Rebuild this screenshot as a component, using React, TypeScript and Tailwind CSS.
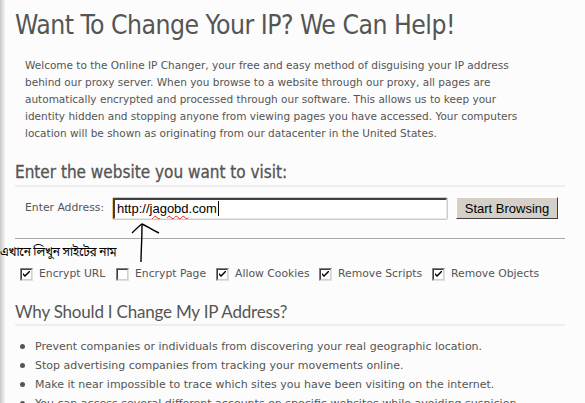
import React from "react";

const body = { fontFamily: '"DejaVu Sans", Verdana, sans-serif' };
const arial = { fontFamily: '"Liberation Sans", Arial, sans-serif' };
const cond = { fontFamily: '"DejaVu Sans Condensed", "DejaVu Sans", Tahoma, sans-serif' };

function Box({ checked }: { checked: boolean }) {
  return (
    <span className="relative inline-block w-[13px] h-[13px] bg-white border border-t-[#808080] border-l-[#808080] border-b-[#e0e0e0] border-r-[#e0e0e0] shrink-0">
      <span className="absolute inset-0 border border-t-[#404040] border-l-[#404040] border-b-[#d4d0c8] border-r-[#d4d0c8]" />
      {checked && (
        <svg className="absolute left-[2px] top-[2px]" width="7" height="7" viewBox="0 0 7 7">
          <path d="M0 2 L0 4 L2 6 L7 1 L7 -1 L2 4 Z" fill="#000" />
        </svg>
      )}
    </span>
  );
}

function Opt({ label, checked, w }: { label: string; checked: boolean; w: string }) {
  return (
    <div className={`flex items-center gap-[6px] ${w}`}>
      <Box checked={checked} />
      <span className="text-[10.8px] text-[#555]">{label}</span>
    </div>
  );
}

export default function App() {
  return (
    <div className="relative w-[585px] h-[403px] overflow-hidden bg-[#fcfcfc] flex" style={body}>
      <div className="w-[5px] h-full bg-gradient-to-r from-[#c8c8c8] to-[#f4f4f4]" />
      <div className="flex-1 pl-[10px] pr-[20px]">
        <h1 className="text-[26.3px] leading-[32px] mt-[9px] text-[#555] tracking-[-0.5px]" style={cond}>
          Want To Change Your IP? We Can Help!
        </h1>
        <p className="mt-[16px] ml-[10px] text-[10.5px] leading-[17px] text-[#555] whitespace-nowrap">
          Welcome to the Online IP Changer, your free and easy method of disguising your IP address
          <br />
          behind our proxy server. When you browse to a website through our proxy, all pages are
          <br />
          automatically encrypted and processed through our software. This allows us to keep your
          <br />
          identity hidden and stopping anyone from viewing pages you have accessed. Your computers
          <br />
          location will be shown as originating from our datacenter in the United States.
        </p>
        <h2 className="mt-[19px] text-[17px] leading-[22px] text-[#555] border-b-2 border-[#eeeeee] pb-[2px] [-webkit-text-stroke:0.3px_#555]" style={cond}>
          Enter the website you want to visit:
        </h2>
        <div className="flex items-center mt-[10px] ml-[10px] h-[22px]">
          <span className="text-[10.8px] text-[#555] w-[87px]">Enter Address:</span>
          <div className="w-[336px] h-[23px] border border-[#f0c878] rounded-[2px] bg-white">
            <div className="h-full border-t-2 border-l-2 border-t-[#404040] border-l-[#404040] border-b border-r border-b-[#e8e8e8] border-r-[#e8e8e8] flex items-center pl-[2px] text-[13px] text-black" style={arial}>
              <span>http://</span>
              <span className="underline decoration-wavy decoration-[#e02020] decoration-1 underline-offset-2">jagobd</span>
              <span>.com</span>
              <span className="inline-block w-[1px] h-[15px] bg-black ml-[1px]" />
            </div>
          </div>
          <button className="ml-[8px] h-[22px] w-[102px] bg-[#d4d0c8] border border-t-white border-l-white border-b-[#404040] border-r-[#404040] text-[13px] text-black leading-none" style={arial}>
            Start Browsing
          </button>
        </div>
        <div className="mt-[19px] h-[1px] bg-[#a8a8a8]" />
        <div className="flex items-center mt-[28px] ml-[5px] h-[14px]">
          <Opt label="Encrypt URL" checked w="w-[96px]" />
          <Opt label="Encrypt Page" checked={false} w="w-[100px]" />
          <Opt label="Allow Cookies" checked w="w-[103px]" />
          <Opt label="Remove Scripts" checked w="w-[113px]" />
          <Opt label="Remove Objects" checked w="w-[120px]" />
        </div>
        <h2 className="mt-[20px] text-[17px] leading-[22px] text-[#555] border-b-2 border-[#eeeeee] pb-[1px] tracking-[-0.2px]" style={{ fontFamily: 'Lato, "Trebuchet MS", sans-serif' }}>
          Why Should I Change My IP Address?
        </h2>
        <ul className="mt-[11px] ml-[5px] text-[11px] leading-[19px] text-[#555]">
          {[
            "Prevent companies or individuals from discovering your real geographic location.",
            "Stop advertising companies from tracking your movements online.",
            "Make it near impossible to trace which sites you have been visiting on the internet.",
            "You can access several different accounts on specific websites while avoiding suspicion.",
          ].map((t) => (
            <li key={t} className="flex items-center whitespace-nowrap">
              <span className="w-[5px] h-[5px] rounded-full bg-[#555] mr-[10px]" />
              {t}
            </li>
          ))}
        </ul>
      </div>
      <div className="absolute left-0 top-[245px] text-[12px] text-black leading-[16px] tracking-[-0.3px]" style={{ fontFamily: '"Noto Sans Bengali", "Noto Sans", sans-serif' }}>
        এখানে লিখুন সাইটের নাম
      </div>
      <svg className="absolute left-[128px] top-[220px]" width="36" height="46" viewBox="0 0 36 46">
        <path d="M13 42 C13 32 14 20 14 5" stroke="#000" strokeWidth="1.4" fill="none" />
        <path d="M4 13 C8 9 11 6 14 4 C19 6 24 10 31 13" stroke="#000" strokeWidth="1.4" fill="none" />
      </svg>
    </div>
  );
}
